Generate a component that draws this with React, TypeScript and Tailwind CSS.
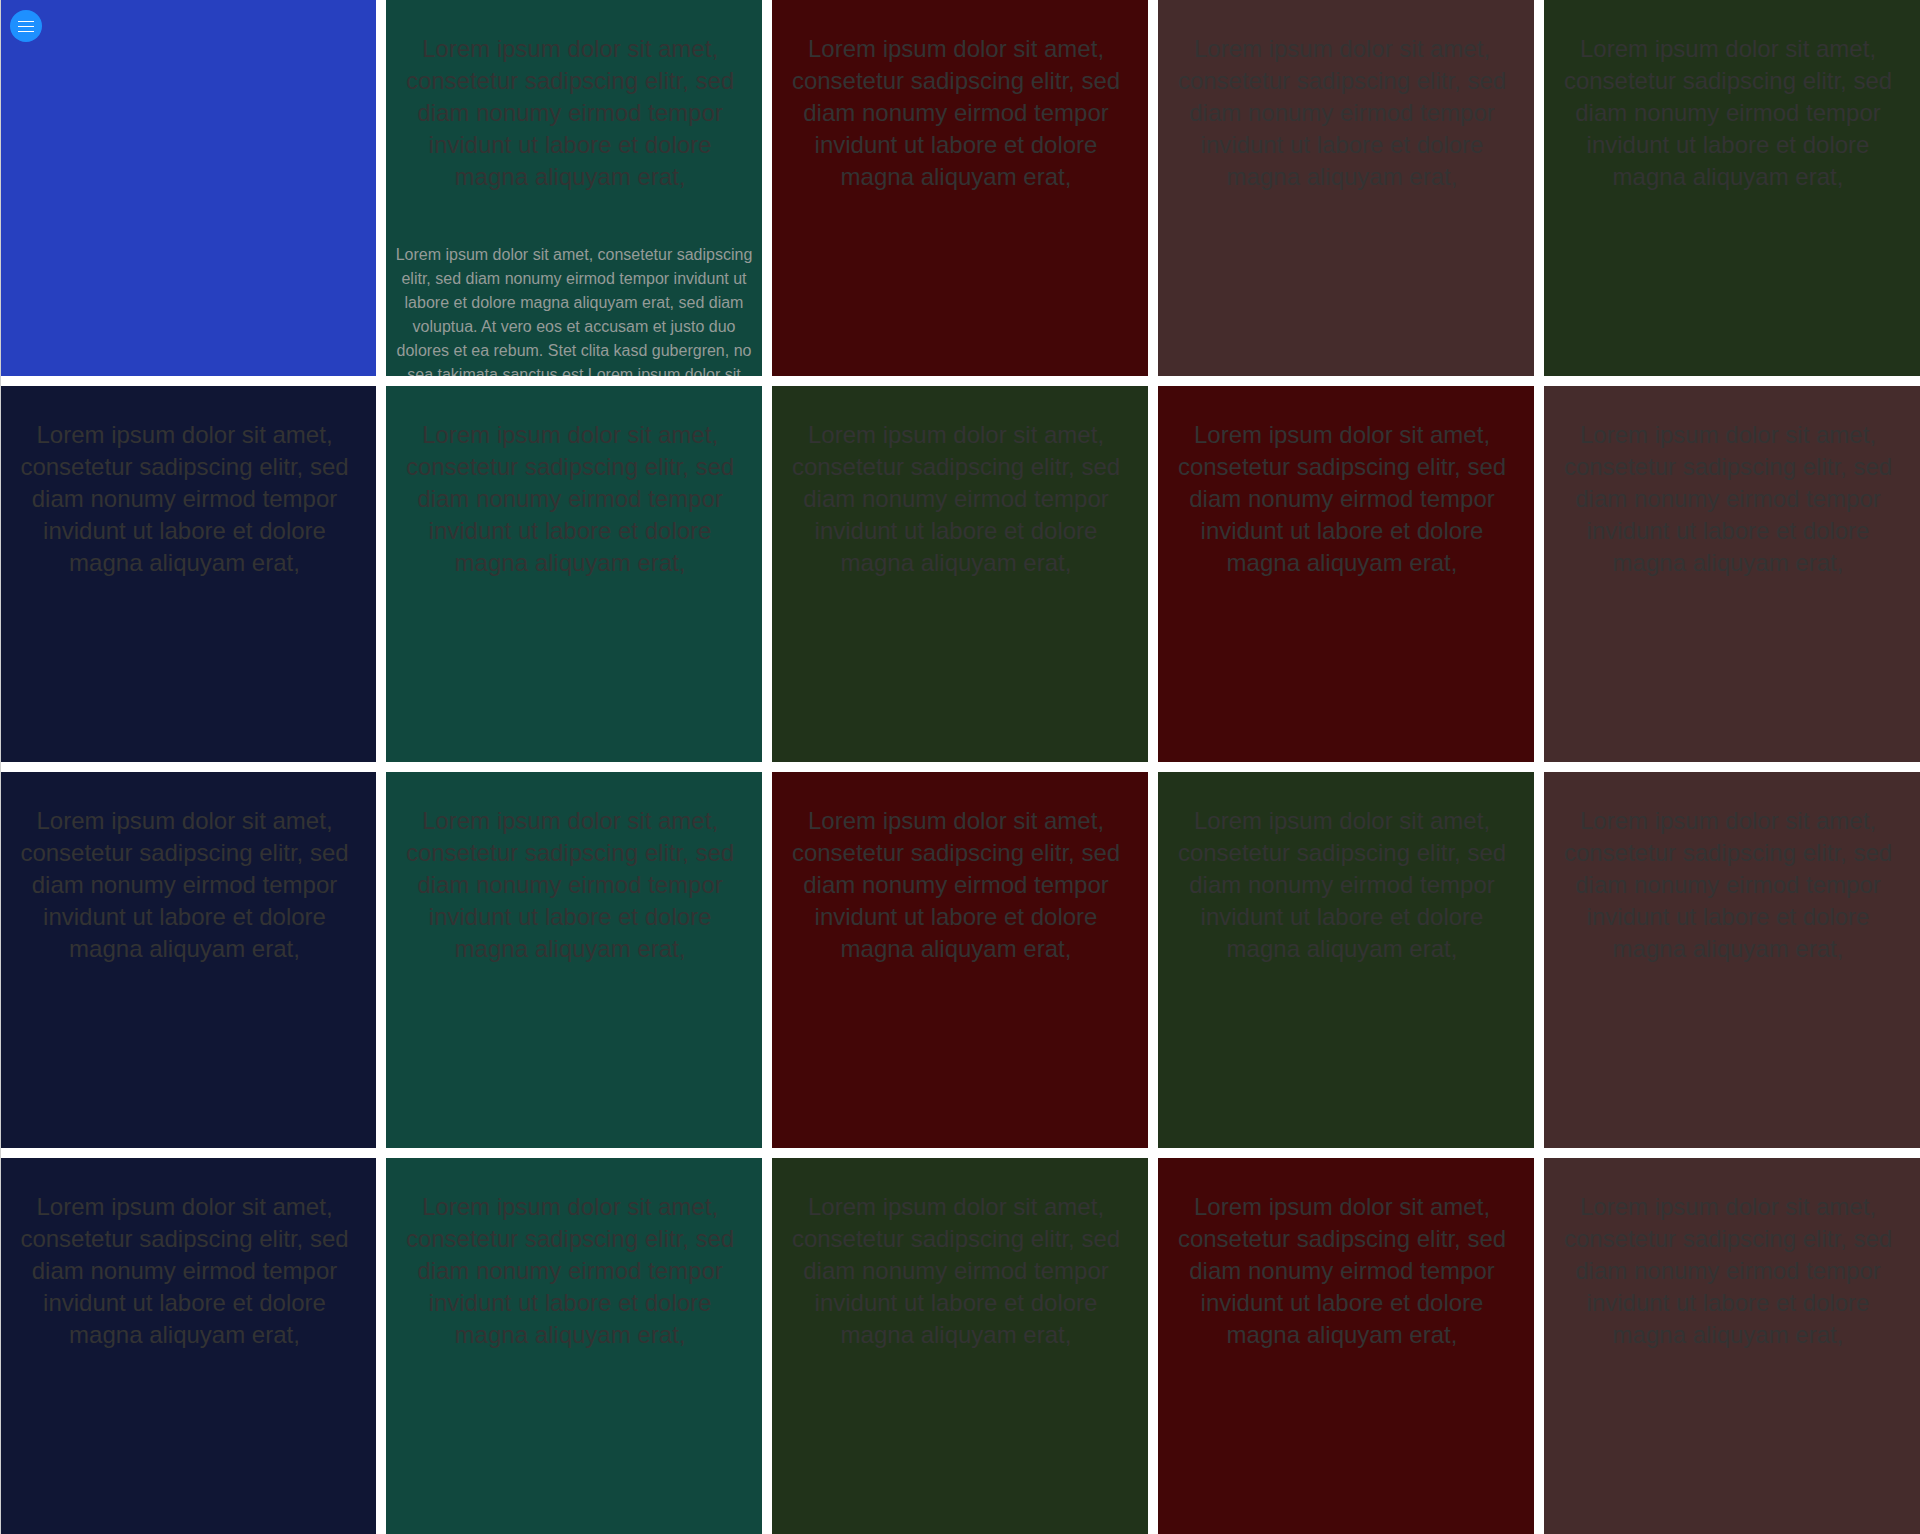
import type { ReactNode } from "react";

type Tone = "blue" | "teal" | "red" | "brown" | "green" | "navy";

const bg: Record<Tone, string> = {
  blue: "bg-[#2740bf]",
  teal: "bg-[#11483e]",
  red: "bg-[#430607]",
  brown: "bg-[#452c2c]",
  green: "bg-[#21331a]",
  navy: "bg-[#101634]",
};

const rows: Tone[][] = [
  ["blue", "teal", "red", "brown", "green"],
  ["navy", "teal", "green", "red", "brown"],
  ["navy", "teal", "red", "green", "brown"],
  ["navy", "teal", "green", "red", "brown"],
];

const headline =
  "Lorem ipsum dolor sit amet, consetetur sadipscing elitr, sed diam nonumy eirmod tempor invidunt ut labore et dolore magna aliquyam erat,";

const body =
  "Lorem ipsum dolor sit amet, consetetur sadipscing elitr, sed diam nonumy eirmod tempor invidunt ut labore et dolore magna aliquyam erat, sed diam voluptua. At vero eos et accusam et justo duo dolores et ea rebum. Stet clita kasd gubergren, no sea takimata sanctus est Lorem ipsum dolor sit amet. Lorem ipsum dolor sit amet, consetetur sadipscing elitr, sed diam nonumy eirmod tempor invidunt ut labore et dolore magna aliquyam erat, sed diam voluptua.";

function MenuButton() {
  return (
    <button
      type="button"
      className="absolute left-[9px] top-[10px] flex h-8 w-8 flex-col items-center justify-center gap-[4px] rounded-full bg-[#1e90ff]"
    >
      <span className="block h-px w-4 bg-white" />
      <span className="block h-px w-4 bg-white" />
      <span className="block h-px w-4 bg-white" />
    </button>
  );
}

function Tile({ tone, children }: { tone: Tone; children?: ReactNode }) {
  return (
    <div className={`relative h-[376px] overflow-hidden ${bg[tone]}`}>
      {children}
    </div>
  );
}

export default function App() {
  return (
    <div className="w-[1920px] border-l border-[#cfcfcf] bg-white font-['Liberation_Sans',Arial,sans-serif]">
      <div className="grid grid-cols-[375px_repeat(4,376px)] gap-[10px]">
        {rows.map((row, r) =>
          row.map((tone, c) => {
            const key = `${r}-${c}`;
            if (r === 0 && c === 0) {
              return (
                <Tile key={key} tone={tone}>
                  <MenuButton />
                </Tile>
              );
            }
            return (
              <Tile key={key} tone={tone}>
                <p className="pl-3 pr-5 pt-[33px] text-center text-[24px] leading-8 text-[#333]">
                  {headline}
                </p>
                {r === 0 && c === 1 && (
                  <p className="mt-[50px] px-2 text-center text-[16px] leading-6 text-[#959b98]">
                    {body}
                  </p>
                )}
              </Tile>
            );
          })
        )}
      </div>
    </div>
  );
}
